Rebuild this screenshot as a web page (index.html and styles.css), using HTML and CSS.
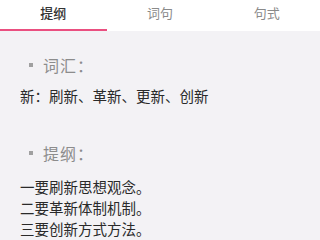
FILE: index.html
```html
<!DOCTYPE html>
<html lang="zh">
<head>
<meta charset="utf-8">
<link rel="stylesheet" href="styles.css">
</head>
<body>
<nav class="tabs">
  <div class="tab active">提纲</div>
  <div class="tab">词句</div>
  <div class="tab">句式</div>
</nav>
<main class="content">
  <h2 class="heading heading-first"><span class="dot"></span>词汇：</h2>
  <p class="line">新：刷新、革新、更新、创新</p>
  <h2 class="heading heading-second"><span class="dot"></span>提纲：</h2>
  <div class="list">
    <p class="line">一要刷新思想观念。</p>
    <p class="line">二要革新体制机制。</p>
    <p class="line">三要创新方式方法。</p>
  </div>
</main>
</body>
</html>
```
FILE: styles.css
```css
html, body {
  margin: 0;
  padding: 0;
}
body {
  width: 320px;
  height: 240px;
  overflow: hidden;
  background: #f3f2f5;
  font-family: "Noto Sans CJK SC", "Noto Sans", sans-serif;
}
.tabs {
  display: grid;
  grid-template-columns: repeat(3, 1fr);
  background: #ffffff;
}
.tab {
  height: 29px;
  line-height: 25px;
  text-align: center;
  font-size: 13px;
  color: #8a8a8a;
  border-bottom: 2px solid transparent;
}
.tab.active {
  color: #333333;
  font-weight: 500;
  border-bottom-color: #ea4f80;
}
.content {
  padding-left: 20px;
}
.heading {
  display: flex;
  align-items: center;
  margin: 0;
  padding-left: 9px;
  font-size: 16px;
  line-height: 24px;
  font-weight: 400;
  letter-spacing: 1px;
  color: #8c8c8c;
}
.heading-first {
  margin-top: 22px;
  margin-bottom: 8px;
}
.heading-second {
  margin-top: 35px;
  margin-bottom: 11px;
}
.dot {
  width: 4px;
  height: 4px;
  background: #a0a0a0;
  margin-right: 10px;
}
.line {
  margin: 0;
  font-size: 14.5px;
  line-height: 21px;
  color: #2a2a2a;
}
```
